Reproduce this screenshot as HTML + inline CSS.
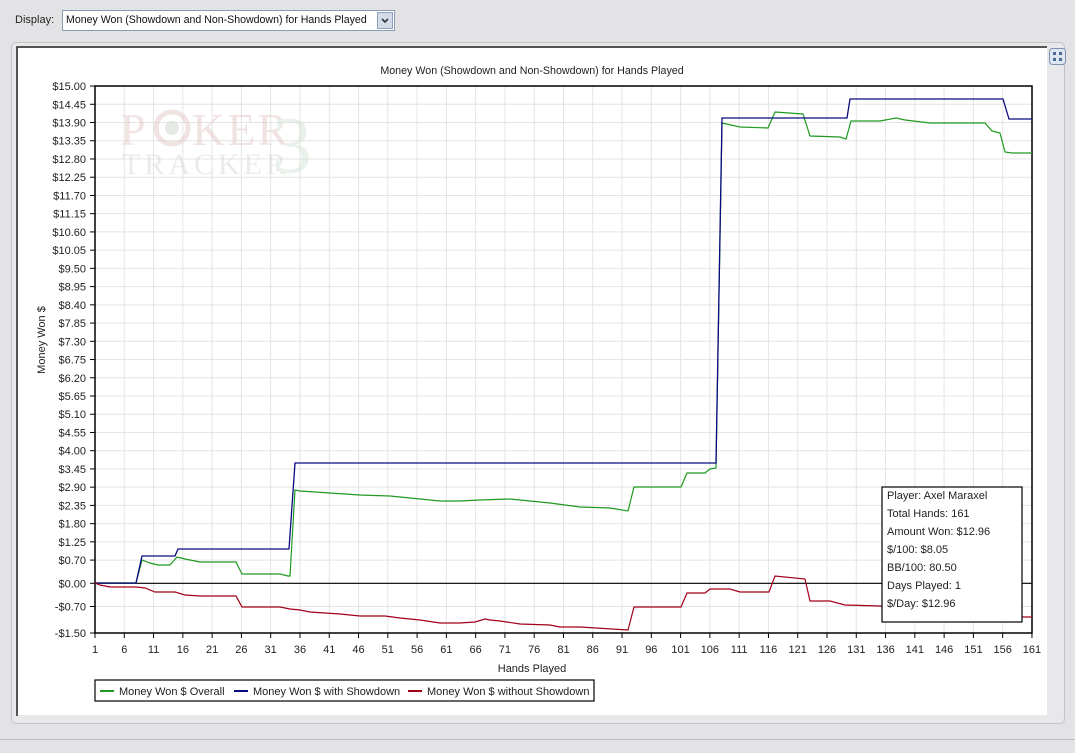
<!DOCTYPE html>
<html><head><meta charset="utf-8"><style>
body{margin:0;width:1075px;height:753px;background:#e3e3e6;font-family:"Liberation Sans",sans-serif;overflow:hidden;position:relative}
.abs{position:absolute}
</style></head><body>
<div class="abs" style="left:15px;top:14px;font-size:11px;color:#222">Display:</div>
<div class="abs" style="left:62px;top:10px;width:333px;height:21px;background:#fff;border:1px solid #8a9bb5;box-sizing:border-box;font-size:10.6px;line-height:19px;padding-left:3px;color:#111;white-space:nowrap">Money Won (Showdown and Non-Showdown) for Hands Played
<div class="abs" style="right:1px;top:1px;width:16px;height:17px;background:#d3dbe8;border:1px solid #8ea0bd;box-sizing:border-box"><svg width="14" height="15" style="position:absolute;left:0;top:0"><path d="M4 6l3 3 3-3" stroke="#333" stroke-width="1.6" fill="none"/></svg></div></div>
<div class="abs" style="left:11px;top:42px;width:1052px;height:680px;border:1px solid #c4c4c8;border-radius:5px;background:#e8e8ea"></div>
<div class="abs" style="left:0;top:739px;width:1075px;height:1px;background:#c0c0c4"></div>
<svg class="abs" style="left:1049px;top:48px" width="18" height="18"><rect x="0.5" y="0.5" width="16" height="16" rx="3" fill="#dde5f0" stroke="#7f93b0"/><g fill="#4a6a95"><rect x="4" y="4" width="3" height="3"/><rect x="10" y="4" width="3" height="3"/><rect x="4" y="10" width="3" height="3"/><rect x="10" y="10" width="3" height="3"/></g></svg>
<svg class="abs" style="left:0;top:0" width="1075" height="753" font-family="Liberation Sans, sans-serif">
<rect x="18" y="48" width="1029" height="667" fill="#fff"/>
<path d="M17 716V47H1047" stroke="#222" stroke-width="1.5" fill="none"/>
<g id="grid" stroke="#e4e4e4" stroke-width="1"></g>
<g opacity="0.5">
<text x="120" y="145" font-family="Liberation Serif, serif" font-size="46" fill="#e6c8c8" letter-spacing="2">P</text>
<circle cx="172" cy="128" r="16" fill="none" stroke="#e6c8c8" stroke-width="5"/>
<circle cx="172" cy="128" r="7" fill="#c8d8c8"/>
<text x="192" y="145" font-family="Liberation Serif, serif" font-size="46" fill="#e6c8c8" letter-spacing="2">KER</text>
<text x="122" y="174" font-family="Liberation Serif, serif" font-size="30" fill="#d8d8d8" letter-spacing="4">TRACKER</text>
<text x="272" y="172" font-family="Liberation Serif, serif" font-size="80" fill="#d6e4d6">3</text>
</g>
<text x="532" y="74" font-size="10.7" text-anchor="middle" fill="#222">Money Won (Showdown and Non-Showdown) for Hands Played</text>
<text x="532" y="672" font-size="11" text-anchor="middle" fill="#222">Hands Played</text>
<text transform="translate(45,340) rotate(-90)" font-size="11" text-anchor="middle" fill="#222">Money Won $</text>
<g id="ax" font-size="11" fill="#222"></g>
<rect x="95" y="86" width="937" height="547" fill="none" stroke="#000" stroke-width="1.5"/>
<line x1="95" y1="583.3" x2="1032" y2="583.3" stroke="#000" stroke-width="1.2"/>
<polyline fill="none" stroke="#1e9a1e" stroke-width="1.2" points="95,583 136,583 142,560 150,563 158,565 170,565 177,557 185,559 200,562 236,562 242,574 280,574 288,576 290,576 295,490 300,491 330,493 360,495 390,496 420,499 440,501 460,501 480,500 510,499 530,501 550,503 580,507 610,508 628,511 634,487 681,487 687,473 705,473 710,469 716,468 722,123 740,127 768,128 775,112 803,114 810,136 840,137 846,139 851,121 880,121 896,118 905,120 930,123 985,123 992,131 1000,133 1005,152 1012,153 1032,153"/>
<polyline fill="none" stroke="#0a0a80" stroke-width="1.3" points="95,583 136,583 142,556 175,556 178,549 289,549 295,463 716,463 722,118 847,118 850,99 1003,99 1009,119 1032,119"/>
<polyline fill="none" stroke="#a00018" stroke-width="1.2" points="95,583 100,585 110,587 136,587 145,588 155,592 175,592 185,595 200,596 236,596 242,607 280,607 290,609 300,610 310,612 340,614 360,616 385,616 400,618 420,620 440,623 460,623 475,622 485,619 490,620 500,621 520,624 550,625 560,627 580,627 628,630 634,607 681,607 687,593 705,593 710,589 730,589 740,592 769,592 775,576 805,579 810,601 830,601 845,605 880,606 1022,617 1032,617"/>
<rect x="882" y="487" width="140" height="135" fill="#fff" stroke="#000" stroke-width="1.2"/>
<g font-size="11" fill="#222">
<text x="887" y="499">Player: Axel Maraxel</text>
<text x="887" y="517">Total Hands: 161</text>
<text x="887" y="535">Amount Won: $12.96</text>
<text x="887" y="553">$/100: $8.05</text>
<text x="887" y="571">BB/100: 80.50</text>
<text x="887" y="589">Days Played: 1</text>
<text x="887" y="607">$/Day: $12.96</text>
</g>
<rect x="95" y="680" width="499" height="21" fill="#fff" stroke="#000" stroke-width="1.2"/>
<g font-size="11" fill="#222">
<line x1="100" y1="691" x2="114" y2="691" stroke="#1e9a1e" stroke-width="2"/><text x="119" y="695">Money Won $ Overall</text>
<line x1="234" y1="691" x2="248" y2="691" stroke="#0a0a80" stroke-width="2"/><text x="253" y="695">Money Won $ with Showdown</text>
<line x1="408" y1="691" x2="422" y2="691" stroke="#a00018" stroke-width="2"/><text x="427" y="695">Money Won $ without Showdown</text>
</g>
</svg>
<script>
var ns="http://www.w3.org/2000/svg",g=document.getElementById('grid'),ax=document.getElementById('ax');
function el(p,t,a,txt){var e=document.createElementNS(ns,t);for(var k in a)e.setAttribute(k,a[k]);if(txt)e.textContent=txt;p.appendChild(e);}
function y(v){return 583.3-v*33.15;}
var labs=[];for(var i=0;i<=26;i++)labs.push(15-i*0.55);labs.push(0);labs.push(-0.7);labs.push(-1.5);
labs.forEach(function(v){var yy=y(v);el(g,'line',{x1:95,x2:1032,y1:yy,y2:yy});
el(ax,'line',{x1:90,x2:95,y1:yy,y2:yy,stroke:'#000'});
var s=(v<0?'-$':'$')+Math.abs(v).toFixed(2);el(ax,'text',{x:86,y:yy+4,'text-anchor':'end'},s);});
for(var h=1;h<=161;h+=5){var x=95+(h-1)*5.856;el(g,'line',{x1:x,x2:x,y1:86,y2:633});
el(ax,'line',{x1:x,x2:x,y1:633,y2:638,stroke:'#000'});el(ax,'text',{x:x,y:653,'text-anchor':'middle'},''+h);}
</script>
</body></html>
